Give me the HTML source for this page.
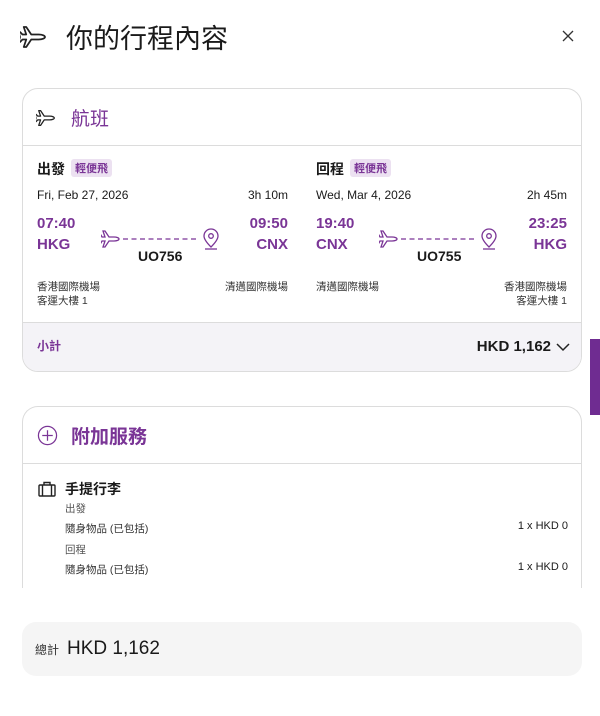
<!DOCTYPE html>
<html><head><meta charset="utf-8">
<style>
*{margin:0;padding:0;box-sizing:border-box}
body{width:600px;height:716px;background:#fff;font-family:"Liberation Sans","Noto Sans CJK TC",sans-serif;color:#1a1a1a;position:relative;overflow:hidden}
.a{position:absolute;white-space:nowrap}
.p{color:#7a3596}
.card{position:absolute;left:22px;width:560px;border:1px solid #dcdcdc;border-radius:16px;background:#fff;overflow:hidden}
.tag{display:inline-block;background:#ece1f1;color:#7a3596;font-size:11px;padding:1px 4px;border-radius:3px;margin-left:6px;vertical-align:2px;font-weight:bold}
.b{font-weight:bold}
</style></head><body>
<svg class="a" style="left:20px;top:22px" width="30" height="30" viewBox="0 0 24 24" fill="none" stroke="#222" stroke-width="1.4" stroke-linejoin="round"><path d="M3 4l2 0 4 6 6 0c3 0 5 1 5 2s-2 2-5 2l-6 0-4 6-2 0 2-6-3 0-2 2-1 0 1-4-1-4 1 0 2 2 3 0z"/></svg>
<div class="a" style="left:66px;top:17px;font-size:27px">你的行程內容</div>
<svg class="a" style="left:562px;top:30px" width="12" height="12" viewBox="0 0 12 12" stroke="#333" stroke-width="1.3"><path d="M1 1L11 11M11 1L1 11"/></svg>

<div class="card" style="top:88px;height:284px">
  <svg class="a" style="left:13px;top:18px" width="22" height="22" viewBox="0 0 24 24" fill="none" stroke="#222" stroke-width="1.4" stroke-linejoin="round"><path d="M3 4l2 0 4 6 6 0c3 0 5 1 5 2s-2 2-5 2l-6 0-4 6-2 0 2-6-3 0-2 2-1 0 1-4-1-4 1 0 2 2 3 0z"/></svg>
  <div class="a p" style="left:48px;top:15px;font-size:19px">航班</div>
  <div class="a" style="left:0;top:56px;width:560px;border-top:1px solid #dcdcdc"></div>

  <div class="a b" style="left:14px;top:70px;font-size:14px">出發<span class="tag">輕便飛</span></div>
  <div class="a" style="left:14px;top:99px;font-size:12px">Fri, Feb 27, 2026</div>
  <div class="a" style="left:225px;top:99px;font-size:12px;width:40px;text-align:right">3h 10m</div>
  <div class="a p b" style="left:14px;top:126px;font-size:15px">07:40</div>
  <div class="a p b" style="left:14px;top:147px;font-size:15px">HKG</div>
  <div class="a p b" style="left:205px;top:126px;font-size:15px;width:60px;text-align:right">09:50</div>
  <div class="a p b" style="left:205px;top:147px;font-size:15px;width:60px;text-align:right">CNX</div>
  <svg class="a" style="left:78px;top:137px" width="118" height="26" viewBox="0 0 118 26" fill="none" stroke="#7a3596" stroke-width="1.3"><path d="M2 4l2 0 4 6 5 0c3 0 5 1 5 2s-2 2-5 2l-5 0-4 6-2 0 2-6-3 0-1 2-1 0 0-4 0-4 1 0 1 2 3 0z" transform="translate(0,1)"/><path d="M22 13H96" stroke-dasharray="5 3.5"/><path d="M110 21c-5-5-7-8-7-11a7 7 0 0114 0c0 3-2 6-7 11z"/><circle cx="110" cy="10" r="2.3"/><path d="M104 23h12"/></svg>
  <div class="a b" style="left:115px;top:159px;font-size:14px">UO756</div>
  <div class="a" style="left:14px;top:190px;font-size:10.5px;color:#333">香港國際機場</div>
  <div class="a" style="left:14px;top:204px;font-size:10.5px;color:#333">客運大樓 1</div>
  <div class="a" style="left:185px;top:190px;font-size:10.5px;color:#333;width:80px;text-align:right">清邁國際機場</div>

  <div class="a b" style="left:293px;top:70px;font-size:14px">回程<span class="tag">輕便飛</span></div>
  <div class="a" style="left:293px;top:99px;font-size:12px">Wed, Mar 4, 2026</div>
  <div class="a" style="left:500px;top:99px;font-size:12px;width:44px;text-align:right">2h 45m</div>
  <div class="a p b" style="left:293px;top:126px;font-size:15px">19:40</div>
  <div class="a p b" style="left:293px;top:147px;font-size:15px">CNX</div>
  <div class="a p b" style="left:484px;top:126px;font-size:15px;width:60px;text-align:right">23:25</div>
  <div class="a p b" style="left:484px;top:147px;font-size:15px;width:60px;text-align:right">HKG</div>
  <svg class="a" style="left:356px;top:137px" width="118" height="26" viewBox="0 0 118 26" fill="none" stroke="#7a3596" stroke-width="1.3"><path d="M2 4l2 0 4 6 5 0c3 0 5 1 5 2s-2 2-5 2l-5 0-4 6-2 0 2-6-3 0-1 2-1 0 0-4 0-4 1 0 1 2 3 0z" transform="translate(0,1)"/><path d="M22 13H96" stroke-dasharray="5 3.5"/><path d="M110 21c-5-5-7-8-7-11a7 7 0 0114 0c0 3-2 6-7 11z"/><circle cx="110" cy="10" r="2.3"/><path d="M104 23h12"/></svg>
  <div class="a b" style="left:394px;top:159px;font-size:14px">UO755</div>
  <div class="a" style="left:293px;top:190px;font-size:10.5px;color:#333">清邁國際機場</div>
  <div class="a" style="left:464px;top:190px;font-size:10.5px;color:#333;width:80px;text-align:right">香港國際機場</div>
  <div class="a" style="left:464px;top:204px;font-size:10.5px;color:#333;width:80px;text-align:right">客運大樓 1</div>

  <div class="a" style="left:0;top:233px;width:560px;height:52px;background:#f4f3f7;border-top:1px solid #dcdcdc"></div>
  <div class="a p b" style="left:14px;top:248px;font-size:12px">小計</div>
  <div class="a b" style="left:420px;top:249px;font-size:15px;width:108px;text-align:right">HKD 1,162</div>
  <svg class="a" style="left:533px;top:253px" width="14" height="10" viewBox="0 0 14 10" fill="none" stroke="#222" stroke-width="1.5"><path d="M1 2l6 6 6-6"/></svg>
</div>

<div class="a" style="left:590px;top:339px;width:10px;height:76px;background:#6f2c91"></div>

<div class="card" style="top:406px;height:200px;border-bottom:none;border-radius:16px 16px 0 0">
  <svg class="a" style="left:14px;top:18px" width="21" height="21" viewBox="0 0 22 22" fill="none" stroke="#7a3596" stroke-width="1.3"><circle cx="11" cy="11" r="9.5"/><path d="M11 5.5v11M5.5 11h11"/></svg>
  <div class="a p b" style="left:48px;top:15px;font-size:19px">附加服務</div>
  <div class="a" style="left:0;top:56px;width:560px;border-top:1px solid #dcdcdc"></div>
  <svg class="a" style="left:15px;top:74px" width="18" height="16" viewBox="0 0 18 16" fill="none" stroke="#222" stroke-width="1.4"><rect x="1" y="4" width="16" height="11" rx="1"/><path d="M6 4V1.5h6V4M4.5 4v11M13.5 4v11"/></svg>
  <div class="a b" style="left:42px;top:72px;font-size:14px">手提行李</div>
  <div class="a" style="left:42px;top:94px;font-size:10.5px;color:#555">出發</div>
  <div class="a" style="left:42px;top:114px;font-size:10.5px;color:#333">隨身物品 (已包括)</div>
  <div class="a" style="left:470px;top:113px;font-size:11px;width:75px;text-align:right">1 x HKD 0</div>
  <div class="a" style="left:42px;top:135px;font-size:10.5px;color:#555">回程</div>
  <div class="a" style="left:42px;top:155px;font-size:10.5px;color:#333">隨身物品 (已包括)</div>
  <div class="a" style="left:470px;top:154px;font-size:11px;width:75px;text-align:right">1 x HKD 0</div>
</div>
<div class="a" style="left:0;top:588px;width:600px;height:128px;background:#fff"></div>

<div class="a" style="left:22px;top:622px;width:560px;height:54px;background:#f5f5f5;border-radius:14px"></div>
<div class="a" style="left:35px;top:641px;font-size:12px;color:#333">總計</div>
<div class="a" style="left:67px;top:638px;font-size:19px">HKD 1,162</div>
</body></html>
